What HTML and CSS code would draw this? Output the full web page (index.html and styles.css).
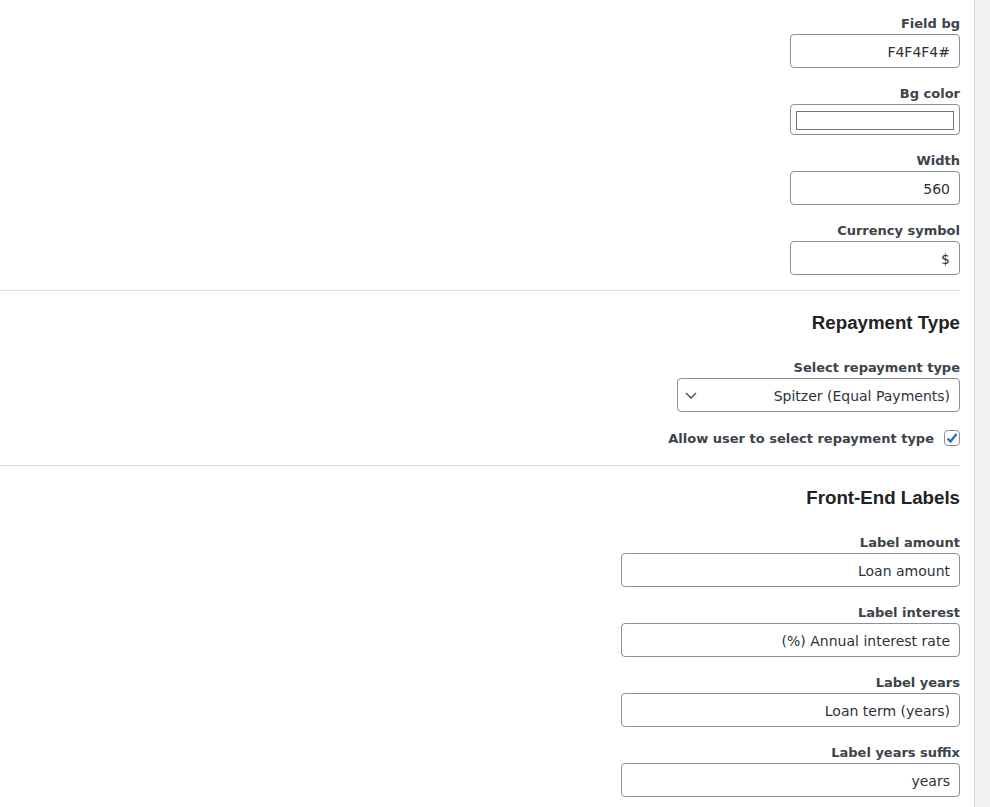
FILE: index.html
```html
<!DOCTYPE html>
<html lang="he">
<head>
    <meta charset="UTF-8">
    <meta name="viewport" content="width=device-width, initial-scale=1.0">
    <title>Loan Calculator Settings</title>
    <link rel="stylesheet" href="styles.css">
</head>
<body>
<div class="page">
    <main class="settings" dir="rtl">
        <section class="group">
            <div class="field">
                <label for="field-bg">Field bg</label>
                <input type="text" id="field-bg" class="input input-small" value="#F4F4F4">
            </div>
            <div class="field">
                <label>Bg color</label>
                <div class="color-input"><span class="swatch"></span></div>
            </div>
            <div class="field">
                <label for="width">Width</label>
                <input type="text" id="width" class="input input-small" value="560">
            </div>
            <div class="field">
                <label for="currency">Currency symbol</label>
                <input type="text" id="currency" class="input input-small" value="$">
            </div>
        </section>

        <section class="group">
            <h2>Repayment Type</h2>
            <div class="field">
                <label for="repayment">Select repayment type</label>
                <div class="select-wrap">
                    <select id="repayment" class="input select">
                        <option>Spitzer (Equal Payments)</option>
                        <option>Equal Principal</option>
                    </select>
                    <svg class="chevron" width="12" height="7" viewBox="0 0 12 7">
                        <path d="M1 1l5 5 5-5" fill="none" stroke="#50575e" stroke-width="1.5"/>
                    </svg>
                </div>
            </div>
            <label class="check-row">
                <span class="checkbox">
                    <svg width="14" height="14" viewBox="0 0 14 14">
                        <path d="M2.5 7.5l3 3 6-7.5" fill="none" stroke="#2271b1" stroke-width="2.4"/>
                    </svg>
                </span>
                <span>Allow user to select repayment type</span>
            </label>
        </section>

        <section class="group">
            <h2>Front-End Labels</h2>
            <div class="field">
                <label for="label-amount">Label amount</label>
                <input type="text" id="label-amount" class="input input-wide" value="Loan amount">
            </div>
            <div class="field">
                <label for="label-interest">Label interest</label>
                <input type="text" id="label-interest" class="input input-wide" value="Annual interest rate (%)">
            </div>
            <div class="field">
                <label for="label-years">Label years</label>
                <input type="text" id="label-years" class="input input-wide" value="Loan term (years)">
            </div>
            <div class="field">
                <label for="label-suffix">Label years suffix</label>
                <input type="text" id="label-suffix" class="input input-wide" value="years">
            </div>
        </section>
    </main>
    <div class="scroll-track"></div>
</div>
</body>
</html>
```

FILE: styles.css
```css
html, body {
    margin: 0;
    height: 100%;
    overflow: hidden;
    background: #fff;
}
.page {
    display: flex;
    height: 100%;
    direction: ltr;
}
.settings {
    flex: 1;
    padding: 14px 14px 0 0;
    font-family: "DejaVu Sans", Verdana, sans-serif;
    color: #3c434a;
}
.group {
    display: flex;
    flex-direction: column;
    align-items: flex-start;
    padding-bottom: 15px;
    border-bottom: 1px solid #dcdcde;
}
.group + .group {
    padding-top: 20px;
}
.group:last-child {
    border-bottom: none;
}
h2 {
    margin: 0 0 23px;
    font-family: "Liberation Sans", Arial, sans-serif;
    font-size: 18.7px;
    line-height: 24px;
    font-weight: bold;
    color: #1d2327;
}
.field {
    display: flex;
    flex-direction: column;
    align-items: flex-start;
    margin-bottom: 16px;
}
.group > .field:last-child {
    margin-bottom: 0;
}
.field label {
    font-size: 13px;
    font-weight: bold;
    line-height: 19px;
    margin-bottom: 1px;
}
.input {
    box-sizing: border-box;
    height: 34px;
    margin: 0;
    padding: 1px 9px 0;
    border: 1px solid #8c8f94;
    border-radius: 4px;
    background: #fff;
    font-family: "DejaVu Sans", Verdana, sans-serif;
    font-size: 14px;
    color: #2c3338;
    text-align: right;
    outline: none;
}
.input-small {
    width: 170px;
}
.input-wide {
    width: 339px;
}
.color-input {
    box-sizing: border-box;
    width: 170px;
    height: 31px;
    padding: 6px 5px;
    border: 1px solid #8c8f94;
    border-radius: 4px;
}
.swatch {
    display: block;
    height: 17px;
    border: 1px solid #767676;
    background: #fff;
}
.select-wrap {
    position: relative;
    display: flex;
}
.select {
    width: 283px;
    appearance: none;
    -webkit-appearance: none;
    padding-left: 30px;
}
.chevron {
    position: absolute;
    left: 8px;
    top: 14px;
    pointer-events: none;
}
.check-row {
    display: flex;
    align-items: center;
    gap: 10px;
    margin-top: 1px;
    margin-bottom: 3px;
    height: 18px;
    font-size: 13px;
    font-weight: bold;
}
.checkbox {
    box-sizing: border-box;
    width: 16px;
    height: 16px;
    border: 1px solid #8c8f94;
    border-radius: 4px;
    display: flex;
    align-items: center;
    justify-content: center;
}
.scroll-track {
    width: 15px;
    border-left: 1px solid #dcdcde;
    background: #f1f1f1;
}
```
